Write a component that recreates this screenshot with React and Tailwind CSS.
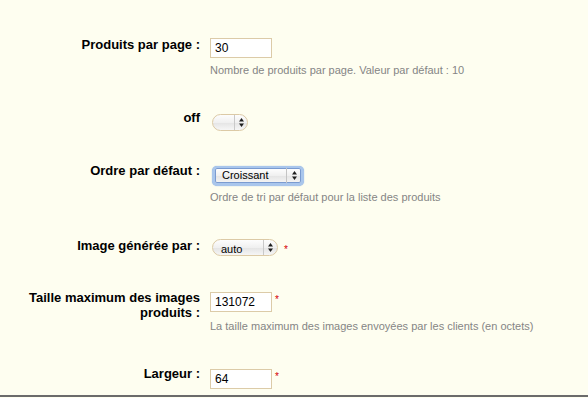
import React from "react";

const labelCls =
  "w-[200px] shrink-0 text-right font-bold text-[13px] leading-[15px] text-black";
const helpCls =
  "text-[11px] leading-[13px] text-[#858585] whitespace-nowrap";
const inputCls =
  "block w-[62px] h-[20px] border border-[#dccba8] bg-white pl-[4px] text-[12px] text-black outline-none font-['Liberation_Sans',Arial,sans-serif]";

function Arrows() {
  return (
    <svg width="5" height="9" viewBox="0 0 5 9" className="block">
      <polygon points="2.5,0 5,3.6 0,3.6" fill="#1e1e1e" />
      <polygon points="0,5.4 5,5.4 2.5,9" fill="#1e1e1e" />
    </svg>
  );
}

function Pill({ width, text, arrowW }) {
  return (
    <div
      className="flex h-[17px] rounded-[9px] border border-[#dccaa6] bg-[linear-gradient(to_bottom,#fdfdfd,#f0f0f0_50%,#e4e4e4_52%,#f6f6f6)] overflow-hidden"
      style={{ width }}
    >
      <div className="flex-1 pl-[8px] pt-[3px] text-[11px] leading-[13px] text-black">
        {text}
      </div>
      <div
        className="flex items-center justify-center border-l border-[#c9c9c9] h-full"
        style={{ width: arrowW }}
      >
        <Arrows />
      </div>
    </div>
  );
}

function Star({ mt, ml }) {
  return (
    <span
      className="text-[10px] leading-[10px] text-[#d40000]"
      style={{ marginTop: mt, marginLeft: ml }}
    >
      *
    </span>
  );
}

export default function App() {
  return (
    <div className="flex h-[398px] w-[588px] flex-col overflow-hidden bg-[#fefef0] font-['Liberation_Sans',Arial,sans-serif]">
      {/* tail of a help line above */}
      <div className="h-[37px] shrink-0">
        <div className="-mt-[12px] flex text-[11px] leading-[13px] text-[#858585]">
          <span className="ml-[278px]">(</span>
          <span className="ml-[155px]">)</span>
        </div>
      </div>

      {/* Produits par page */}
      <div className="flex h-[73px] shrink-0">
        <div className={labelCls}>Produits par page :</div>
        <div className="ml-[10px] flex flex-col pt-[1px]">
          <input className={inputCls} defaultValue="30" readOnly />
          <div className={`${helpCls} mt-[6px]`}>
            Nombre de produits par page. Valeur par défaut : 10
          </div>
        </div>
      </div>

      {/* off */}
      <div className="flex h-[53px] shrink-0">
        <div className={labelCls}>off</div>
        <div className="ml-[12px] pt-[4px]">
          <Pill width={36} text="" arrowW={13} />
        </div>
      </div>

      {/* Ordre par défaut */}
      <div className="flex h-[75px] shrink-0">
        <div className={labelCls}>Ordre par défaut :</div>
        <div className="ml-[12px] flex flex-col pt-[3px]">
          <div className="w-[92px] h-[20px] rounded-[5px] bg-[#a9c6ec] px-[3px] pb-[3px] pt-[2px] shadow-[0_0_1px_#7fa4da]">
            <div className="flex h-[15px] rounded-[2px] shadow-[inset_0_0_0_1px_#7a9bd0] bg-[linear-gradient(to_bottom,#ffffff,#f0f0f0_50%,#e4e4e4_52%,#f6f6f6)]">
              <div className="flex-1 pl-[7px] pt-[1px] text-[11px] leading-[13px] text-black">
                Croissant
              </div>
              <div className="flex w-[15px] items-center justify-center border-l border-[#c4c4c4]">
                <Arrows />
              </div>
            </div>
          </div>
          <div className={`${helpCls} mt-[5px] -ml-[2px]`}>
            Ordre de tri par défaut pour la liste des produits
          </div>
        </div>
      </div>

      {/* Image générée par */}
      <div className="flex h-[52px] shrink-0">
        <div className={labelCls}>Image générée par :</div>
        <div className="ml-[12px] flex items-start pt-[1px]">
          <Pill width={66} text="auto" arrowW={14} />
          <Star mt={6} ml={6} />
        </div>
      </div>

      {/* Taille maximum */}
      <div className="flex h-[76px] shrink-0">
        <div className={labelCls}>
          Taille maximum des images
          <br />
          produits :
        </div>
        <div className="ml-[10px] flex flex-col pt-[2px]">
          <div className="flex items-start">
            <input className={inputCls} defaultValue="131072" readOnly />
            <Star mt={3} ml={3} />
          </div>
          <div className={`${helpCls} mt-[8px]`}>
            La taille maximum des images envoyées par les clients (en octets)
          </div>
        </div>
      </div>

      {/* Largeur */}
      <div className="flex h-[29px] shrink-0">
        <div className={labelCls}>Largeur :</div>
        <div className="ml-[10px] flex items-start pt-[3px]">
          <input className={inputCls} defaultValue="64" readOnly />
          <Star mt={3} ml={3} />
        </div>
      </div>

      <div className="h-[2px] shrink-0 bg-[#6b6b6b]" />
      <div className="h-[1px] shrink-0 bg-[#fefef0]" />
    </div>
  );
}
